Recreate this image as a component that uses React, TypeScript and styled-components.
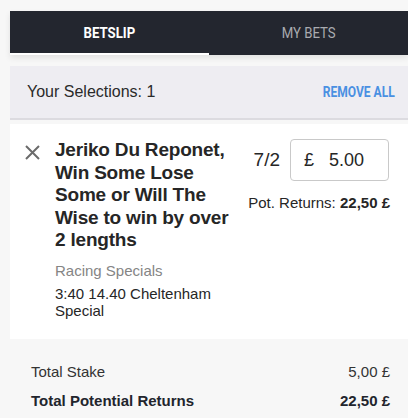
import React from "react";
import styled, { createGlobalStyle } from "styled-components";

const Global = createGlobalStyle`
  html, body { margin: 0; padding: 0; background: #f7f7f7; }
  body { font-family: "Liberation Sans", Arial, sans-serif; color: #262626; }
`;

const Page = styled.div`
  padding: 11px 0 0 10px;
  width: 398px;
`;

const Tabs = styled.div`
  display: grid;
  grid-template-columns: 1fr 1fr;
  height: 44px;
  background: #23262f;
  box-shadow: 0 3px 6px rgba(0, 0, 0, 0.09);
  margin-bottom: 11px;
`;

const Tab = styled.div<{ $active?: boolean }>`
  display: flex;
  align-items: center;
  justify-content: center;
  font-family: Roboto, "Liberation Sans", sans-serif;
  font-size: 15px;
  font-weight: ${(p) => (p.$active ? 700 : 400)};
  color: ${(p) => (p.$active ? "#ffffff" : "#a9abb0")};
  border-bottom: 2px solid ${(p) => (p.$active ? "#ffffff" : "transparent")};
  box-sizing: border-box;
  padding-top: 2px;
`;

const Condensed = styled.span<{ $scale?: number; $origin?: string }>`
  display: inline-block;
  transform: scaleX(${(p) => p.$scale ?? 0.88});
  transform-origin: ${(p) => p.$origin ?? "center"} center;
`;

const Header = styled.div`
  display: flex;
  align-items: center;
  justify-content: space-between;
  height: 52px;
  background: #eeedf2;
  border-bottom: 2px solid #dcdbe0;
  padding: 0 13px 0 17px;
  margin-bottom: 4px;
`;

const HeaderTitle = styled.div`
  font-size: 16px;
  color: #2a2a2a;
`;

const RemoveAll = styled.div`
  font-family: Roboto, "Liberation Sans", sans-serif;
  font-size: 14px;
  font-weight: 700;
  color: #4a90e2;
`;

const Card = styled.div`
  background: #ffffff;
  height: 215px;
  box-sizing: border-box;
  padding: 15px 19px 0 15px;
  display: grid;
  grid-template-columns: 15px 178px minmax(0, 1fr);
  column-gap: 15px;
  align-items: start;
`;

const Close = styled.div`
  padding-top: 6px;
  display: flex;
`;

const Info = styled.div`
  display: flex;
  flex-direction: column;
`;

const Title = styled.div`
  font-size: 19px;
  font-weight: 700;
  line-height: 22.5px;
  color: #262626;
  letter-spacing: -0.2px;
`;

const Market = styled.div`
  margin-top: 10px;
  font-size: 15px;
  color: #858585;
  line-height: 18px;
`;

const Event = styled.div`
  margin-top: 5px;
  font-size: 15px;
  color: #262626;
  line-height: 17px;
`;

const Right = styled.div`
  display: flex;
  flex-direction: column;
  align-items: flex-end;
`;

const StakeRow = styled.div`
  display: flex;
  align-items: center;
  gap: 10px;
`;

const Odds = styled.div`
  font-size: 19px;
  color: #262626;
`;

const StakeBox = styled.div`
  width: 99px;
  height: 42px;
  box-sizing: border-box;
  border: 1px solid #c9c9c9;
  border-radius: 4px;
  display: flex;
  align-items: center;
  padding-left: 13px;
  gap: 15px;
  font-size: 18px;
  color: #262626;
`;

const PotReturns = styled.div`
  margin-top: 13px;
  margin-right: -1px;
  font-size: 15px;
  color: #262626;
  white-space: nowrap;
  b { font-weight: 700; }
`;

const Totals = styled.div`
  padding: 24px 18px 0 21px;
  display: flex;
  flex-direction: column;
  gap: 11px;
`;

const TotalRow = styled.div<{ $bold?: boolean }>`
  display: flex;
  justify-content: space-between;
  font-size: 15px;
  line-height: 18px;
  font-weight: ${(p) => (p.$bold ? 700 : 400)};
  color: ${(p) => (p.$bold ? "#22252d" : "#333333")};
`;

export default function App() {
  return (
    <>
      <Global />
      <Page>
        <Tabs>
          <Tab $active>
            <Condensed>BETSLIP</Condensed>
          </Tab>
          <Tab>
            <Condensed>MY BETS</Condensed>
          </Tab>
        </Tabs>
        <Header>
          <HeaderTitle>Your Selections: 1</HeaderTitle>
          <RemoveAll>
            <Condensed $scale={0.86} $origin="right">REMOVE ALL</Condensed>
          </RemoveAll>
        </Header>
        <Card>
          <Close>
            <svg width="15" height="15" viewBox="0 0 15 15">
              <path d="M1 1 L14 14 M14 1 L1 14" stroke="#6b6b6b" strokeWidth="2" />
            </svg>
          </Close>
          <Info>
            <Title>Jeriko Du Reponet, Win Some Lose Some or Will The Wise to win by over 2 lengths</Title>
            <Market>Racing Specials</Market>
            <Event>
              3:40 14.40 Cheltenham
              <br />
              Special
            </Event>
          </Info>
          <Right>
            <StakeRow>
              <Odds>7/2</Odds>
              <StakeBox>
                <span>£</span>
                <span>5.00</span>
              </StakeBox>
            </StakeRow>
            <PotReturns>
              Pot. Returns: <b>22,50 £</b>
            </PotReturns>
          </Right>
        </Card>
        <Totals>
          <TotalRow>
            <span>Total Stake</span>
            <span>5,00 £</span>
          </TotalRow>
          <TotalRow $bold>
            <span>Total Potential Returns</span>
            <span>22,50 £</span>
          </TotalRow>
        </Totals>
      </Page>
    </>
  );
}
